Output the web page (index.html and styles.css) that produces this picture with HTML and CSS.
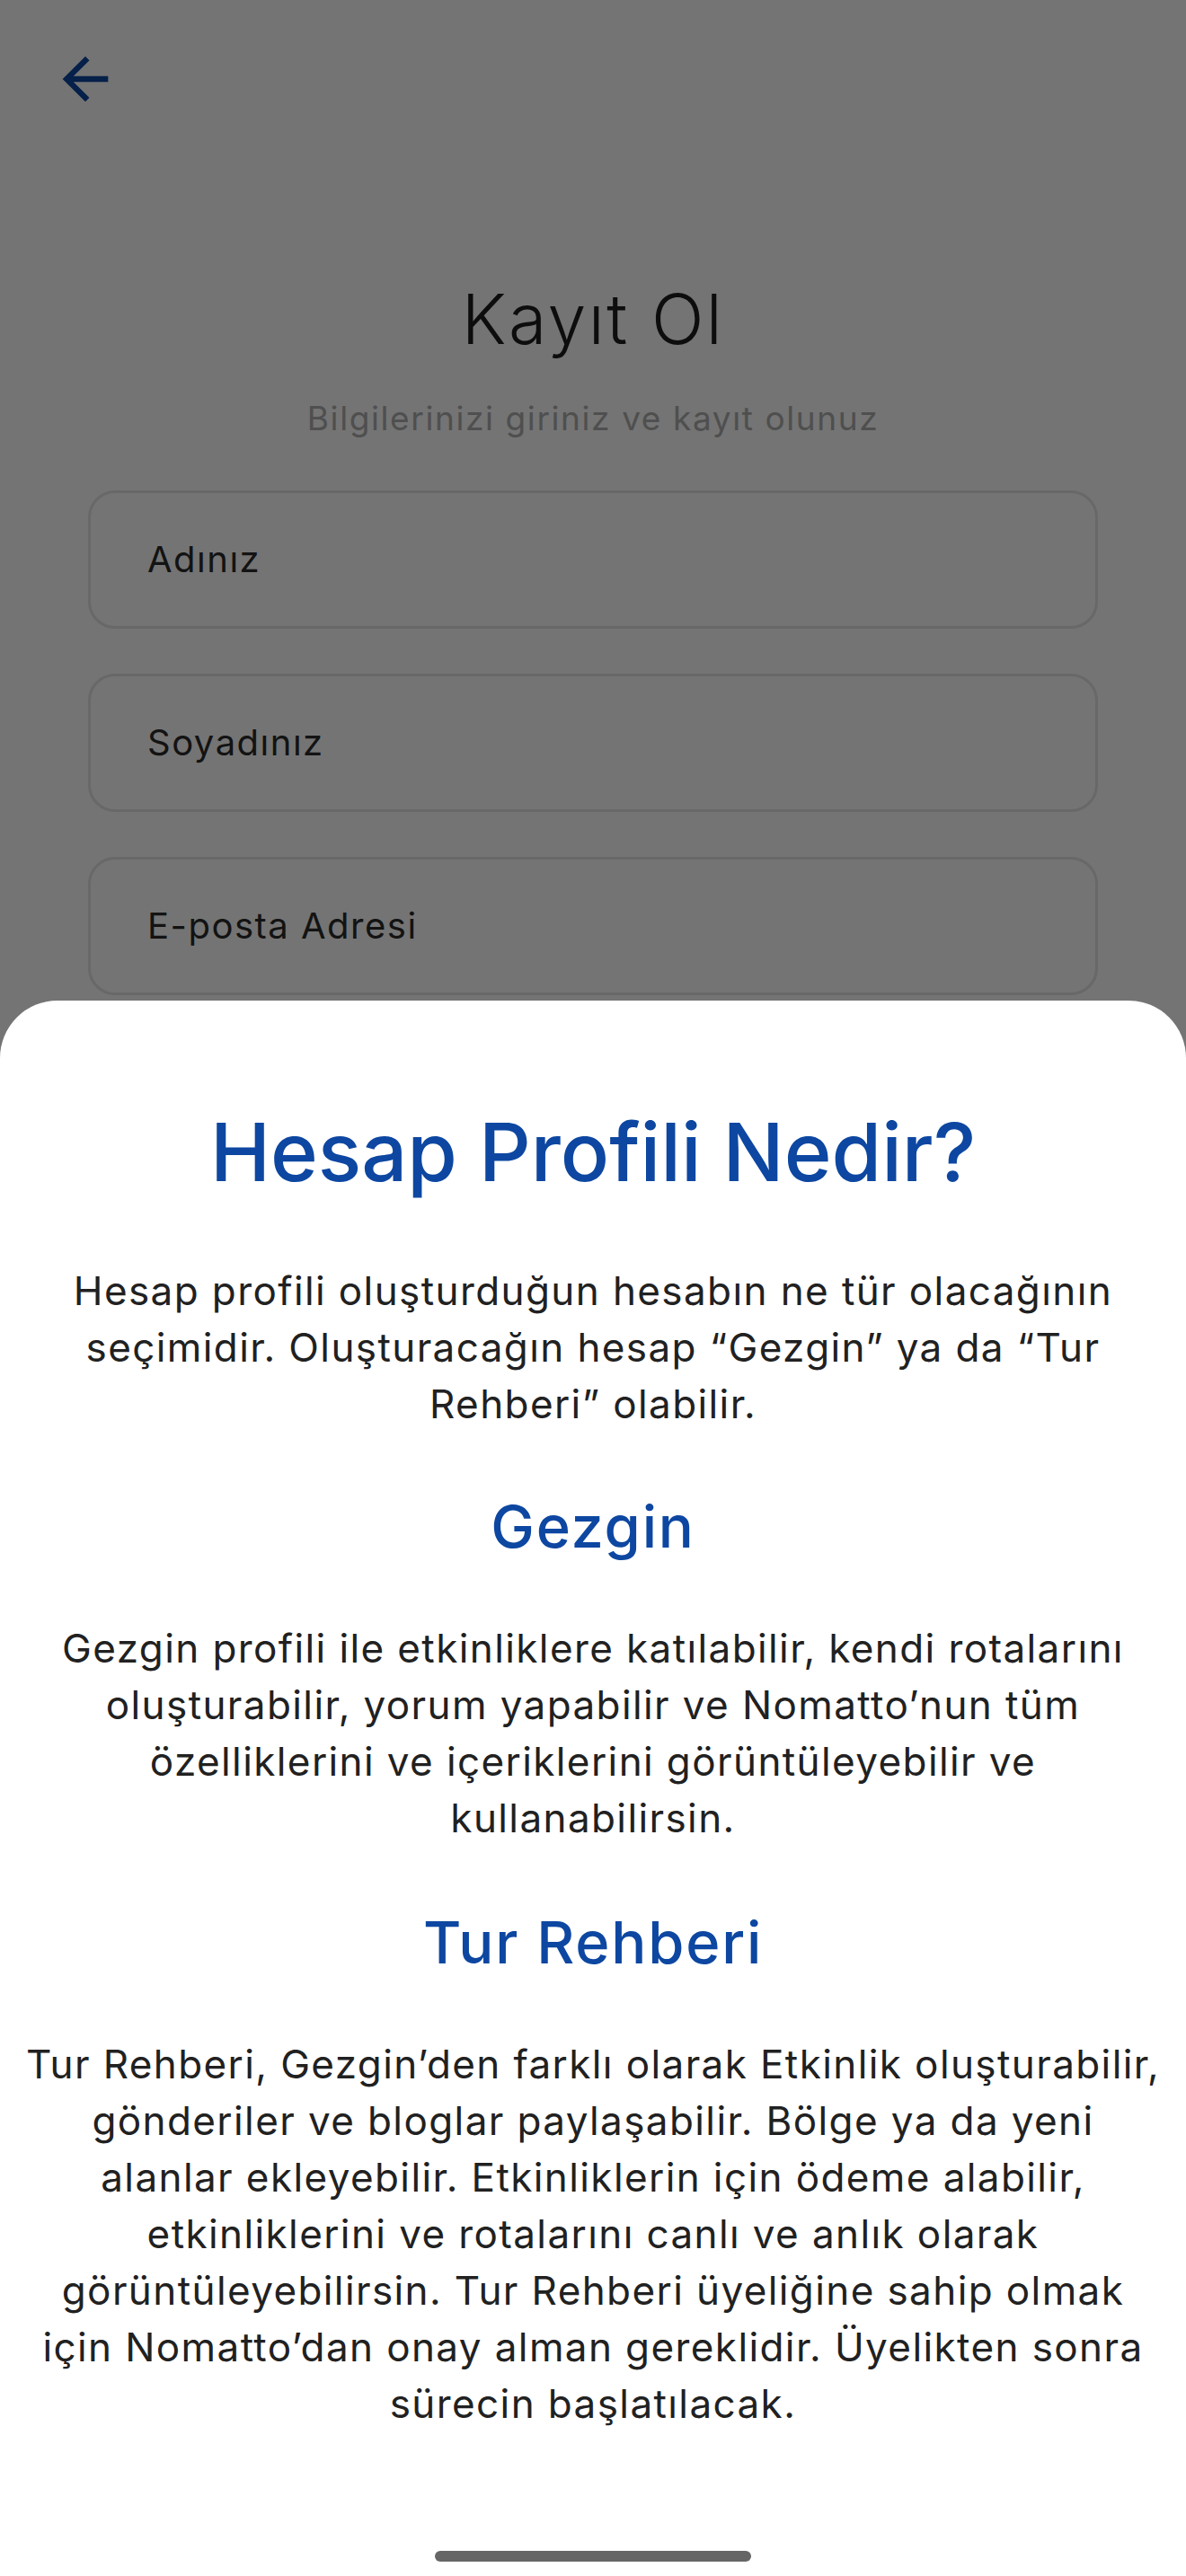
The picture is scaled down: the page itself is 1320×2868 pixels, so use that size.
FILE: index.html
```html
<!DOCTYPE html>
<html lang="tr">
<head>
<meta charset="utf-8">
<title>Kayıt Ol</title>
<link rel="stylesheet" href="styles.css">
</head>
<body>
<main class="page">
  <button class="back" aria-label="Geri">
    <svg viewBox="0 0 24 24" width="76" height="76"><path d="M20 11H7.83l5.59-5.59L12 4l-8 8 8 8 1.41-1.41L7.83 13H20v-2z" fill="#0D47A1"/></svg>
  </button>
  <h1 class="page-title">Kayıt Ol</h1>
  <p class="page-subtitle">Bilgilerinizi giriniz ve kayıt olunuz</p>
  <form class="form">
    <div class="field"><span class="field-label">Adınız</span></div>
    <div class="field"><span class="field-label">Soyadınız</span></div>
    <div class="field"><span class="field-label">E-posta Adresi</span></div>
  </form>
</main>
<div class="overlay"></div>
<section class="sheet">
  <h2 class="sheet-title">Hesap Profili Nedir?</h2>
  <p class="sheet-text">Hesap profili oluşturduğun hesabın ne tür olacağının<br>seçimidir. Oluşturacağın hesap “Gezgin” ya da “Tur<br>Rehberi” olabilir.</p>
  <h3 class="sheet-heading">Gezgin</h3>
  <p class="sheet-text">Gezgin profili ile etkinliklere katılabilir, kendi rotalarını<br>oluşturabilir, yorum yapabilir ve Nomatto’nun tüm<br>özelliklerini ve içeriklerini görüntüleyebilir ve<br>kullanabilirsin.</p>
  <h3 class="sheet-heading sheet-heading-second">Tur Rehberi</h3>
  <p class="sheet-text">Tur Rehberi, Gezgin’den farklı olarak Etkinlik oluşturabilir,<br>gönderiler ve bloglar paylaşabilir. Bölge ya da yeni<br>alanlar ekleyebilir. Etkinliklerin için ödeme alabilir,<br>etkinliklerini ve rotalarını canlı ve anlık olarak<br>görüntüleyebilirsin. Tur Rehberi üyeliğine sahip olmak<br>için Nomatto’dan onay alman gereklidir. Üyelikten sonra<br>sürecin başlatılacak.</p>
  <div class="home-indicator"></div>
</section>
</body>
</html>
```
FILE: styles.css
```css
* { box-sizing: border-box; }
html, body {
  margin: 0;
  padding: 0;
}
body {
  width: 1320px;
  height: 2868px;
  overflow: hidden;
  background: #ffffff;
  font-family: Inter, "Noto Sans", sans-serif;
  position: relative;
}
.page {
  display: flex;
  flex-direction: column;
  padding-top: 50px;
}
.back {
  align-self: flex-start;
  margin-left: 57px;
  width: 76px;
  height: 76px;
  padding: 0;
  border: 0;
  background: transparent;
  display: flex;
}
.page-title {
  margin: 183px 0 0;
  text-align: center;
  font-size: 77px;
  line-height: 92px;
  font-weight: 300;
  letter-spacing: 2.5px;
  color: #1e1e1e;
}
.page-subtitle {
  margin: 42px 0 0;
  text-align: center;
  font-size: 37px;
  line-height: 45px;
  letter-spacing: 1.6px;
  color: #adadad;
}
.form {
  margin: 58px 98px 0;
  display: flex;
  flex-direction: column;
  gap: 50px;
}
.field {
  height: 154px;
  border: 3px solid #e4e4e4;
  border-radius: 30px;
  display: flex;
  align-items: center;
  padding: 0 0 0 63px;
}
.field-label {
  font-size: 40px;
  line-height: 48px;
  letter-spacing: 1.5px;
  color: #2a2a2a;
}
.overlay {
  position: absolute;
  inset: 0;
  background: rgba(0, 0, 0, 0.545);
}
.sheet {
  position: absolute;
  left: 0;
  right: 0;
  top: 1114px;
  bottom: 0;
  background: #ffffff;
  border-radius: 64px 64px 0 0;
  padding: 115px 8px 0;
  display: flex;
  flex-direction: column;
  align-items: center;
  text-align: center;
}
.sheet-title {
  margin: 0;
  font-size: 90px;
  line-height: 108px;
  font-weight: 500;
  color: #0D47A1;
}
.sheet-text {
  margin: 69px 0 0;
  font-size: 44px;
  line-height: 63px;
  letter-spacing: 1.4px;
  color: #212121;
}
.sheet-heading {
  margin: 66px 0 0;
  font-size: 65px;
  line-height: 78px;
  font-weight: 500;
  letter-spacing: 1.8px;
  color: #0D47A1;
}
.sheet-heading + .sheet-text {
  margin-top: 65px;
}
.sheet-heading-second {
  margin-top: 68px;
}
.home-indicator {
  position: absolute;
  left: 50%;
  bottom: 16px;
  width: 352px;
  height: 12px;
  margin-left: -176px;
  border-radius: 6px;
  background: #666666;
}
```
